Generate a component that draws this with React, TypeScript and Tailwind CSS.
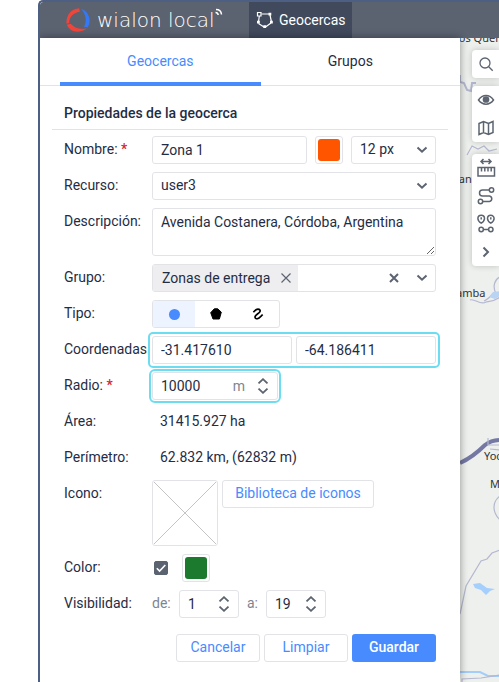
import React, { useState } from 'react';

const BOX = 'h-7 rounded-[3px] border border-[#e1e3e6] bg-white';
const GHOST = 'rounded-[3px] border border-[#e1e3e6] bg-white pb-0.5 text-[#478bff] hover:bg-[#f5f8ff]';

const Chevron = () => (
  <svg width="12" height="8" viewBox="0 0 12 8" fill="none" stroke="#5c6470" strokeWidth="2">
    <path d="M1.5 1.5 6 5.7l4.500-4.200" />
  </svg>
);

type RowProps = {
  label: string;
  htmlFor?: string;
  required?: boolean;
  children: React.ReactNode;
};

const Row = ({ label, htmlFor, required, children }: RowProps) => (
  <div className="flex items-start">
    <label htmlFor={htmlFor} className="h-7 w-[88px] shrink-0 leading-[26px] whitespace-nowrap">
      {label}
      {required && <span className="font-medium text-[#d9232e]"> *</span>}
    </label>
    {children}
  </div>
);

type SelectProps = { id: string; label?: string; options: string[]; className: string };

const Select = ({ id, label, options, className }: SelectProps) => (
  <div className={`relative ${className}`}>
    <select id={id} aria-label={label} className={`${BOX} w-full appearance-none px-2 pb-0.5 leading-6 outline-none`}>
      {options.map((option) => (
        <option key={option}>{option}</option>
      ))}
    </select>
    <span className="pointer-events-none absolute inset-y-0 right-2 flex items-center">
      <Chevron />
    </span>
  </div>
);

type StepperProps = {
  id: string;
  label?: string;
  initial: number;
  step?: number;
  unit?: string;
  className: string;
};

const Stepper = ({ id, label, initial, step = 1, unit, className }: StepperProps) => {
  const [value, setValue] = useState(initial);

  return (
    <div className={`${BOX} flex items-center px-2 ${className}`}>
      <input
        id={id}
        aria-label={label}
        inputMode="numeric"
        value={value}
        onChange={(e) => setValue(Number(e.target.value) || 0)}
        className="w-full min-w-0 flex-1 outline-none"
      />
      {unit && <span className="mr-3 text-[#7e858f]">{unit}</span>}
      <span className="flex flex-col gap-1">
        <button type="button" aria-label="Aumentar" onClick={() => setValue(value + step)}>
          <svg className="block" width="12" height="6" viewBox="0 0 12 6" fill="none" stroke="#5c6470" strokeWidth="1.800">
            <path d="M1.500 5.400 6 1.200l4.500 4.200" />
          </svg>
        </button>
        <button type="button" aria-label="Disminuir" onClick={() => setValue(value - step)}>
          <svg className="block" width="12" height="6" viewBox="0 0 12 6" fill="none" stroke="#5c6470" strokeWidth="1.800">
            <path d="M1.500 .6 6 4.800 10.500.6" />
          </svg>
        </button>
      </span>
    </div>
  );
};

const Swatch = ({ id, label, color }: { id: string; label: string; color: string }) => (
  <button id={id} type="button" aria-label={label} className={`${BOX} w-7 shrink-0 p-0.5`}>
    <span className={`block size-full rounded-[3px] ${color}`} />
  </button>
);

const SHAPES = [
  { id: 'circle', label: 'Círculo', icon: <circle cx="8.500" cy="8.500" r="5.500" fill="#478bff" /> },
  {
    id: 'polygon',
    label: 'Polígono',
    icon: <path d="M6.300 2.800h3.400L13.300 6.200 11.400 13H5L2.700 6.700z" fill="#000" stroke="#000" strokeLinejoin="round" />,
  },
  {
    id: 'line',
    label: 'Línea',
    icon: (
      <path
        d="M3.400 6.300C5 4.200 6.400 3.200 7.900 3.200c1.900 0 2.800 1.300 1.900 2.700C8.800 7.500 5.200 8.600 5 10.800c-.1 1.400 1.200 2.200 2.500 1.900 1.700-.5 3.200-2.300 5.200-4"
        fill="none"
        stroke="#000"
        strokeWidth="1.700"
      />
    ),
  },
];

const TypePicker = () => {
  const [shape, setShape] = useState('circle');

  return (
    <div role="radiogroup" aria-label="Tipo" className={`${BOX} flex w-32 overflow-hidden`}>
      {SHAPES.map(({ id, label, icon }) => (
        <label key={id} className="relative flex flex-1 cursor-pointer items-center justify-center has-checked:bg-[#edf3ff]">
          <input
            type="radio"
            name="shape"
            value={id}
            aria-label={label}
            checked={shape === id}
            onChange={() => setShape(id)}
            className="absolute inset-0 appearance-none"
          />
          <svg width="16" height="16" viewBox="0 0 16 16">
            {icon}
          </svg>
        </label>
      ))}
    </div>
  );
};

const Header = () => (
  <header className="flex h-9 items-stretch overflow-hidden rounded-tl-[3px] bg-[#5b6270] text-white">
    <div className="flex w-[209px] shrink-0 items-center pl-[26px]">
      <svg className="shrink-0" width="24" height="24" viewBox="0 0 24 24">
        <path d="M13.200.300C5.200.6-.2 7.600.5 15.800l2.700-.9C3.200 9 6.600 5 13.800 3.700z" fill="#f0453a" />
        <path d="M.8 16.800c3.700 8 12.400 8.800 20 3.600-6.400 1.200-11.600.2-16.200-4.600z" fill="#f0453a" />
        <path d="M14.800.600c8 3 11.200 11.600 6.900 18.600l-3.700-.5c3-6.500 2-12-3.200-18.100z" fill="#3478f6" />
      </svg>
      <span className="ml-[7px] font-['DejaVu_Sans',sans-serif] text-[20px] font-extralight">wialon local</span>
      <svg className="-mt-4 shrink-0" width="8" height="8" viewBox="0 0 8 8" fill="none" stroke="#fff" strokeWidth="1.500">
        <path d="M1 1.500c3 0 5.300 2 5.500 5M.5 4.500c1.600 0 2.500 1 2.700 2.500" />
      </svg>
    </div>
    <button type="button" className="flex w-[103px] shrink-0 items-center gap-[5px] bg-[#404a5c] pl-[7px]">
      <svg width="18" height="18" viewBox="0 0 18 18" fill="none" stroke="#fff" strokeWidth="1.200">
        <path d="M5.500 3H13.500M14 4l1.500 7M15 12l-5.500 4M8 16l-5.500-3.500M2.500 11l.8-6" />
        <path d="M1.500 1.500h3.500v3.500H1.500z" />
        <path d="M12.500 1.800h2.800v2.800h-2.800zM14 9.800h2.800v2.800H14zM7.300 14.300h2.800v2.800H7.300zM1 9.800h2.800v2.800H1z" fill="#fff" stroke="none" />
      </svg>
      Geocercas
    </button>
  </header>
);

const Tool = ({ label, children }: { label: string; children: React.ReactNode }) => (
  <button type="button" aria-label={label} className="flex h-7 w-7 items-center justify-center">
    <svg width="20" height="20" viewBox="0 0 20 20" fill="none" stroke="#5c6470" strokeWidth="1.500">
      {children}
    </svg>
  </button>
);

const GROUP = 'rounded-l-[4px] bg-white shadow-[0_0_6px_rgba(0,0,0,0.200)]';
const PLACE = "absolute font-['Noto_Sans',sans-serif] text-[11px] leading-4 whitespace-nowrap text-[#333]";

const MapView = () => (
  <div className="relative flex-1 overflow-hidden bg-[#edf0ed]">
    <svg className="absolute top-0 left-0" width="60" height="644" viewBox="0 0 60 644" fill="none" stroke="#b5b8cf" strokeWidth="1.200">
      <path d="M0 37v7l4 1 3 7 4 1 1-8 4 0" strokeWidth="2" />
      <path d="M7 117l5-9 6 3 6-3 5 5 8-2" />
      <path d="M10 262c5-2 10 6 16 2 6-1 9-1 14-5M24 263c3-1 6-4 9-7M36 256c-4-8-1-15 4-17" />
      <path d="M29 259l4-5 7-1v5l-5 3z" fill="#b9d3f5" stroke="none" />
      <path d="M0 425c11-5 18-11 25-18 5-4 9-5 15-5" stroke="#7478a3" strokeWidth="4" />
      <path d="M28 400v7h12M30 411l10 1" />
      <path d="M40 458c-8 6-8 16 0 24" />
      <path d="M0 576l6-28 15-25 6-2 5-6 8-3" />
      <path d="M0 634h20l8 4h12" stroke="#a3cdfa" strokeWidth="2" />
      <path d="M2 644v-3l19-1 19-3" />
      <path d="M13 546l7-1 7 5 8 1-5 2-4 4-5-5-6-2z" fill="#a5cffc" stroke="none" />
    </svg>
    <span className={`${PLACE} -top-2 -left-[7px]`}>Los Quer</span>
    <span className={`${PLACE} top-[133px] -left-2`}>nan</span>
    <span className={`${PLACE} top-[247px] -left-1`}>amba</span>
    <span className={`${PLACE} top-[410px] left-6`}>Yoc</span>
    <span className={`${PLACE} top-[438px] left-[30px]`}>M</span>
    <div className="absolute top-3 right-0 left-3 flex flex-col">
      <div className={`${GROUP} mb-2`}>
        <Tool label="Buscar">
          <circle cx="9" cy="9" r="5" strokeWidth="1.300" />
          <path d="M12.700 12.700l4 4" strokeWidth="1.300" />
        </Tool>
      </div>
      <div className={`${GROUP} mb-3`}>
        <Tool label="Visibilidad en el mapa">
          <path d="M2.500 10c4-6 11-6 15 0-4 5.500-11 5.500-15 0z" />
          <circle cx="10" cy="9.500" r="2.600" fill="#5c6470" />
        </Tool>
        <Tool label="Capas del mapa">
          <path d="M3 5.500 7.500 3.500 12.500 5.500 17 3.500v11l-4.500 2-5-2-4.500 2zM7.500 3.500v11M12.500 5.500v11" />
        </Tool>
      </div>
      <div className={GROUP}>
        <Tool label="Distancia">
          <path d="M5 3.500h10M7.500 1 5 3.500 7.500 6M12.500 1 15 3.500 12.500 6" />
          <path d="M2 9.500h16.500v8.500H2zM5.500 9.500v4M8.800 9.500v4M12 9.500v4M15.200 9.500v4" />
        </Tool>
        <Tool label="Ruta">
          <circle cx="15.500" cy="4" r="2.200" />
          <circle cx="4.500" cy="15.500" r="2.200" />
          <path d="M13.300 4H6.500a3 3 0 0 0 0 6h7a2.800 2.800 0 0 1 0 5.500h-6.800" />
        </Tool>
        <Tool label="Dirección">
          <path d="M5.200 9.200C3 7.800 1.900 6.300 1.900 4.500a3.300 3.300 0 0 1 6.600 0c0 1.800-1.100 3.300-3.300 4.700zM14.800 9.200c-2.200-1.400-3.300-2.900-3.300-4.700a3.300 3.300 0 0 1 6.600 0c0 1.800-1.100 3.300-3.300 4.700z" />
          <path d="M5.200 3.200v2.400M14.800 3.200v2.400M7.400 15.500h5.200" />
          <circle cx="5.200" cy="15.500" r="2.200" />
          <circle cx="14.800" cy="15.500" r="2.200" />
        </Tool>
        <Tool label="Más herramientas">
          <path d="M7.500 5.500 12 10l-4.500 4.500" strokeWidth="2" />
        </Tool>
      </div>
    </div>
  </div>
);

const GeofenceForm = () => {
  const [colored, setColored] = useState(true);

  return (
    <form className="px-3 pb-5" onSubmit={(e) => e.preventDefault()}>
      <h2 className="border-b border-[#e1e3e6] px-3 pt-[18px] pb-1.5 text-[14px] leading-[19px] font-medium">Propiedades de la geocerca</h2>

      <div className="flex flex-col gap-2 px-3 pt-1.5">
        <Row label="Nombre:" htmlFor="name" required>
          <div className="flex min-w-0 flex-1 gap-2">
            <input id="name" defaultValue="Zona 1" className={`${BOX} min-w-0 flex-1 px-2 outline-none`} />
            <Swatch id="name-color" label="Color del nombre" color="bg-[#ff5500]" />
            <Select id="font-size" label="Tamaño de fuente" options={['12 px', '14 px', '16 px']} className="w-[85px]" />
          </div>
        </Row>
        <Row label="Recurso:" htmlFor="resource">
          <Select id="resource" options={['user3']} className="flex-1" />
        </Row>
        <Row label="Descripción:" htmlFor="description">
          <textarea
            id="description"
            defaultValue="Avenida Costanera, Córdoba, Argentina"
            className="h-12 min-w-0 flex-1 resize-y rounded-[3px] border border-[#e1e3e6] px-2 py-[3px] leading-5 outline-none"
          />
        </Row>
        <Row label="Grupo:" htmlFor="group">
          <div className={`${BOX} flex min-w-0 flex-1 items-center pr-[7px]`}>
            <span className="flex h-[26px] shrink-0 items-center gap-2.5 bg-[#eeeef0] pr-1.5 pb-px pl-[9px]">
              Zonas de entrega
              <button type="button" aria-label="Quitar Zonas de entrega">
                <svg width="12" height="12" viewBox="0 0 12 12" stroke="#5c6470" strokeWidth="1.200">
                  <path d="M1.500 1.500l9 9M10.500 1.500l-9 9" />
                </svg>
              </button>
            </span>
            <input id="group" className="w-0 min-w-0 flex-1 px-2 outline-none" />
            <button type="button" aria-label="Borrar grupos" className="mr-4">
              <svg width="12" height="12" viewBox="0 0 12 12" stroke="#5c6470" strokeWidth="2">
                <path d="M2 2l8 8M10 2l-8 8" />
              </svg>
            </button>
            <button type="button" aria-label="Abrir lista de grupos">
              <Chevron />
            </button>
          </div>
        </Row>
        <Row label="Tipo:">
          <TypePicker />
        </Row>
        <Row label="Coordenadas" htmlFor="latitude">
          <div className="grid min-w-0 flex-1 grid-cols-2 gap-1 rounded-[1px] outline-2 outline-offset-2 outline-[#6cdcf0]">
            <input id="latitude" defaultValue="-31.417610" className={`${BOX} min-w-0 px-2 outline-none`} />
            <input aria-label="Longitud" defaultValue="-64.186411" className={`${BOX} min-w-0 px-2 outline-none`} />
          </div>
        </Row>
        <Row label="Radio:" htmlFor="radius" required>
          <Stepper id="radius" initial={10000} step={100} unit="m" className="w-[126px] outline-2 outline-offset-1 outline-[#6cdcf0]" />
        </Row>
        <Row label="Área:">
          <output className="pl-2 leading-[26px]">31415.927 ha</output>
        </Row>
        <Row label="Perímetro:">
          <output className="pl-2 leading-[26px]">62.832 km, (62832 m)</output>
        </Row>
        <Row label="Icono:" htmlFor="icon">
          <div className="flex items-start gap-1">
            <div className="size-[66px] rounded-[3px] border border-[#e1e3e6]">
              <svg width="64" height="64" viewBox="0 0 64 64" stroke="#c4c4c4" strokeWidth="1">
                <path d="M1 1l62 62M63 1 1 63" />
              </svg>
            </div>
            <button id="icon" type="button" className={`${GHOST} h-7 w-[152px]`}>
              Biblioteca de iconos
            </button>
          </div>
        </Row>
        <Row label="Color:" htmlFor="use-color">
          <div className="flex items-center gap-3.5 pl-0.5">
            <span className="grid size-3.5">
              <input
                id="use-color"
                type="checkbox"
                checked={colored}
                onChange={(e) => setColored(e.target.checked)}
                className="peer col-start-1 row-start-1 size-3.5 appearance-none rounded-[2px] border border-[#5b6270] checked:bg-[#5b6270]"
              />
              <svg className="pointer-events-none invisible col-start-1 row-start-1 peer-checked:visible" width="14" height="14" viewBox="0 0 14 14" fill="none" stroke="#fff" strokeWidth="1.600">
                <path d="M2.800 7.200l2.800 2.800L11.300 4" />
              </svg>
            </span>
            <Swatch id="fill" label="Color de la geocerca" color="bg-[#1b7a2e]" />
          </div>
        </Row>
        <Row label="Visibilidad:" htmlFor="zoom-from">
          <div className="flex">
            <label htmlFor="zoom-from" className="w-[27px] leading-[26px] text-[#7e858f]">
              de:
            </label>
            <Stepper id="zoom-from" initial={1} className="w-[60px]" />
            <label htmlFor="zoom-to" className="w-[27px] pl-2 leading-[26px] text-[#7e858f]">
              a:
            </label>
            <Stepper id="zoom-to" initial={19} className="w-[60px]" />
          </div>
        </Row>
      </div>

      <div className="mt-4 flex justify-end gap-1 px-3">
        <button type="button" className={`${GHOST} h-7 w-[84px]`}>
          Cancelar
        </button>
        <button type="reset" className={`${GHOST} h-7 w-[84px]`}>
          Limpiar
        </button>
        <button type="submit" className="h-7 w-[84px] rounded-[3px] bg-[#478bff] pb-0.5 font-medium text-white">
          Guardar
        </button>
      </div>
    </form>
  );
};

const App = () => {
  return (
    <div className="min-h-screen bg-white pl-[38px] font-[Roboto,sans-serif] text-[14px] leading-5 text-[#1f2d45]">
      <div className="flex min-h-screen flex-col overflow-hidden rounded-tl-[5px] border-t-2 border-l-2 border-[#4d5f82]">
        <Header />
        <div className="flex flex-1">
          <main className="relative z-10 w-[420px] shrink-0 bg-white shadow-[0_0_8px_rgba(0,0,0,0.400)]">
            <nav className="flex h-12 border-b border-[#e1e3e6] px-5">
              <a href="#geocercas" className="-mb-px flex flex-auto items-center justify-center border-b-4 border-[#478bff] pt-0.5 text-[#478bff]">
                Geocercas
              </a>
              <a href="#grupos" className="-mb-px flex flex-auto items-center justify-center border-b-4 border-transparent pt-0.5">
                Grupos
              </a>
            </nav>
            <GeofenceForm />
          </main>
          <MapView />
        </div>
      </div>
    </div>
  );
};

export default App;
